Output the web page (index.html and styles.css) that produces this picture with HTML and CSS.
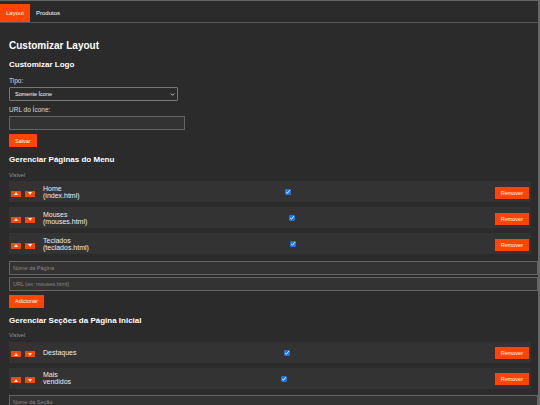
FILE: index.html
```html
<!DOCTYPE html>
<html lang="pt-BR">
<head>
    <meta charset="UTF-8">
    <meta name="viewport" content="width=device-width, initial-scale=1.0">
    <title>Painel Admin</title>
    <link rel="stylesheet" href="styles.css">
</head>
<body>
    <div class="tabs">
        <button class="tab active">Layout</button>
        <button class="tab">Produtos</button>
    </div>

    <div class="content">
        <h1>Customizar Layout</h1>

        <h2>Customizar Logo</h2>
        <label for="logoType">Tipo:</label>
        <div class="select-wrap">
            <select id="logoType">
                <option>Somente Ícone</option>
                <option>Somente Texto</option>
                <option>Ícone e Texto</option>
            </select>
            <svg class="chevron" viewBox="0 0 6 4" width="5" height="3"><path d="M0.8 0.8 3 3 5.2 0.8" fill="none" stroke="#ddd" stroke-width="1.2"/></svg>
        </div>
        <label for="iconUrl">URL do Ícone:</label>
        <input type="text" id="iconUrl" class="short">
        <button class="btn">Salvar</button>

        <h2>Gerenciar Páginas do Menu</h2>
        <div class="list-head">Visível</div>
        <div class="list">
            <div class="item">
                <div class="item-left">
                    <button class="move"><svg viewBox="0 0 4 3" width="4" height="3"><path d="M2 0 4 3H0z" fill="#fff"/></svg></button>
                    <button class="move"><svg viewBox="0 0 4 3" width="4" height="3"><path d="M0 0h4L2 3z" fill="#fff"/></svg></button>
                    <span class="name">Home (index.html)</span>
                </div>
                <input type="checkbox" checked>
                <button class="btn">Remover</button>
            </div>
            <div class="item">
                <div class="item-left">
                    <button class="move"><svg viewBox="0 0 4 3" width="4" height="3"><path d="M2 0 4 3H0z" fill="#fff"/></svg></button>
                    <button class="move"><svg viewBox="0 0 4 3" width="4" height="3"><path d="M0 0h4L2 3z" fill="#fff"/></svg></button>
                    <span class="name">Mouses (mouses.html)</span>
                </div>
                <input type="checkbox" checked>
                <button class="btn">Remover</button>
            </div>
            <div class="item">
                <div class="item-left">
                    <button class="move"><svg viewBox="0 0 4 3" width="4" height="3"><path d="M2 0 4 3H0z" fill="#fff"/></svg></button>
                    <button class="move"><svg viewBox="0 0 4 3" width="4" height="3"><path d="M0 0h4L2 3z" fill="#fff"/></svg></button>
                    <span class="name">Teclados (teclados.html)</span>
                </div>
                <input type="checkbox" checked>
                <button class="btn">Remover</button>
            </div>
        </div>
        <input type="text" class="wide" placeholder="Nome da Página">
        <input type="text" class="wide" placeholder="URL (ex: mouses.html)">
        <button class="btn">Adicionar</button>

        <h2>Gerenciar Seções da Página Inicial</h2>
        <div class="list-head">Visível</div>
        <div class="list">
            <div class="item">
                <div class="item-left">
                    <button class="move"><svg viewBox="0 0 4 3" width="4" height="3"><path d="M2 0 4 3H0z" fill="#fff"/></svg></button>
                    <button class="move"><svg viewBox="0 0 4 3" width="4" height="3"><path d="M0 0h4L2 3z" fill="#fff"/></svg></button>
                    <span class="name">Destaques</span>
                </div>
                <input type="checkbox" checked>
                <button class="btn">Remover</button>
            </div>
            <div class="item">
                <div class="item-left">
                    <button class="move"><svg viewBox="0 0 4 3" width="4" height="3"><path d="M2 0 4 3H0z" fill="#fff"/></svg></button>
                    <button class="move"><svg viewBox="0 0 4 3" width="4" height="3"><path d="M0 0h4L2 3z" fill="#fff"/></svg></button>
                    <span class="name">Mais vendidos</span>
                </div>
                <input type="checkbox" checked>
                <button class="btn">Remover</button>
            </div>
        </div>
        <input type="text" class="wide" placeholder="Nome da Seção">
    </div>
</body>
</html>
```

FILE: styles.css
```css
* {
    margin: 0;
    padding: 0;
    box-sizing: border-box;
    font-family: 'Liberation Sans', Arial, Helvetica, sans-serif;
}

body {
    background: #2b2b2b;
    color: #fff;
    border-top: 1px solid #666;
    border-right: 2px solid #666;
    height: 100vh;
    overflow: hidden;
}

.tabs {
    display: flex;
    padding-top: 3px;
    border-bottom: 1px solid #555;
}

.tab {
    height: 18px;
    padding: 0 6px;
    background: none;
    border: none;
    color: #fff;
    font-size: 6px;
    cursor: pointer;
}

.tab.active {
    background: #ff4500;
}

.content {
    padding: 17px 7px 0 9px;
}

h1 {
    font-size: 10px;
    line-height: 12px;
    font-weight: bold;
}

h2 {
    font-size: 8px;
    line-height: 10px;
    font-weight: bold;
    margin-top: 8px;
}

label {
    display: block;
    font-size: 6.5px;
    line-height: 8px;
    color: #ddd;
    margin-top: 7px;
}

.select-wrap {
    position: relative;
    width: 169px;
    margin-top: 2px;
}

select {
    display: block;
    width: 100%;
    height: 14px;
    padding: 0 5px;
    appearance: none;
    background: #2b2b2b;
    color: #fff;
    border: 1px solid #777;
    border-radius: 1px;
    font-size: 5.5px;
}

.chevron {
    position: absolute;
    right: 3px;
    top: 6px;
    pointer-events: none;
}

.select-wrap + label {
    margin-top: 5px;
}

input[type="text"] {
    display: block;
    height: 14px;
    padding: 0 3px;
    background: #333;
    color: #fff;
    border: 1px solid #666;
    font-size: 5.5px;
}

input[type="text"]::placeholder {
    color: #888;
}

input.short {
    width: 176px;
    margin-top: 2px;
}

input.wide {
    width: calc(100% + 7px);
    margin-top: 2px;
}

.list + input.wide {
    margin-top: 6.5px;
}

.btn {
    display: block;
    height: 13px;
    padding: 0 6px;
    margin-top: 4px;
    background: #ff4500;
    color: #fff;
    border: none;
    font-size: 5.5px;
    cursor: pointer;
}

.btn:hover {
    background: #e03e00;
}

.list-head {
    font-size: 5.5px;
    line-height: 7px;
    color: #999;
    margin: 6.5px 0 2.5px;
}

.list {
    display: flex;
    flex-direction: column;
    gap: 5px;
}

.item {
    display: flex;
    justify-content: space-between;
    align-items: center;
    height: 21px;
    padding: 0 2px;
    background: #333;
}

.item-left {
    display: flex;
    align-items: center;
    gap: 4px;
}

.move {
    display: flex;
    justify-content: center;
    align-items: center;
    width: 10px;
    height: 6px;
    margin-top: 4px;
    background: #ff4500;
    border: none;
    cursor: pointer;
}

.name {
    width: min-content;
    margin-left: 4px;
    font-size: 7px;
    line-height: 7px;
    color: #eee;
}

.item input[type="checkbox"] {
    width: 6px;
    height: 6px;
    margin: 1px 0 0 2px;
    accent-color: #1a73e8;
}

.item .btn {
    height: 12px;
    margin-top: 2px;
}
```
